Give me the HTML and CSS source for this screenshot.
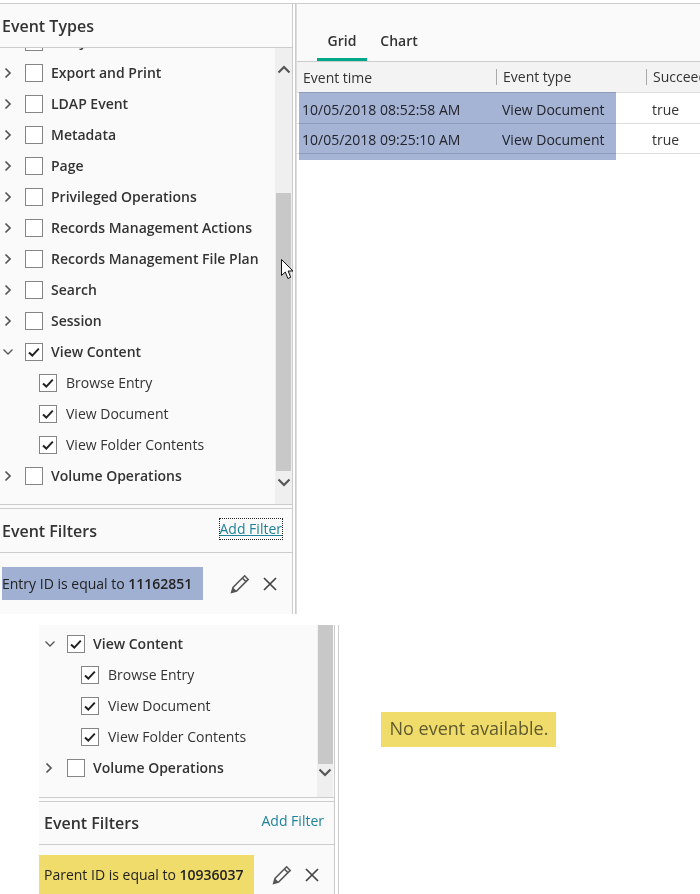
FILE: index.html
```html
<!DOCTYPE html>
<html lang="en">
<head>
<meta charset="utf-8">
<title>Audit events</title>
<link rel="stylesheet" href="styles.css">
</head>
<body>
<svg class="defs" width="0" height="0" aria-hidden="true">
  <defs>
    <symbol id="right" viewBox="0 0 8 12"><path d="M1.5 1.5 6 6l-4.5 4.5" fill="none" stroke="#555" stroke-width="1.7"/></symbol>
    <symbol id="down" viewBox="0 0 12 8"><path d="M1.5 1.5 6 6l4.5-4.5" fill="none" stroke="#555" stroke-width="1.3"/></symbol>
    <symbol id="tick" viewBox="0 0 16 16"><path d="M3 8.500 6.300 11.600 12.800 4.600" fill="none" stroke="#222" stroke-width="2"/></symbol>
    <symbol id="pencil" viewBox="0 0 20 20"><path d="M14.6 1.8 18.2 5.4 6.6 17 1.6 18.4 3 13.4Z M12.4 4 16 7.6" fill="none" stroke="#555" stroke-width="1.5"/><path d="M1.6 18.4 3 13.4 6.6 17Z" fill="#555"/></symbol>
    <symbol id="close" viewBox="0 0 16 16"><path d="M2 2 14 14M14 2 2 14" fill="none" stroke="#444" stroke-width="1.7"/></symbol>
    <symbol id="sb-up" viewBox="0 0 14 9"><path d="M1.5 7.5 7 2l5.500 5.500" fill="none" stroke="#555" stroke-width="2.200"/></symbol>
    <symbol id="sb-down" viewBox="0 0 14 9"><path d="M1.500 1.500 7 7l5.500-5.500" fill="none" stroke="#555" stroke-width="2.200"/></symbol>
  </defs>
</svg>

<section class="shot-top">
  <aside class="side">
    <h2 class="side-title">Event Types</h2>
    <div class="tree-wrap">
      <ul class="tree tree-scrolled">
        <li class="row"><svg class="chev"><use href="#right"/></svg><span class="box"></span><span class="lbl">Entry</span></li>
        <li class="row"><svg class="chev"><use href="#right"/></svg><span class="box"></span><span class="lbl">Export and Print</span></li>
        <li class="row"><svg class="chev"><use href="#right"/></svg><span class="box"></span><span class="lbl">LDAP Event</span></li>
        <li class="row"><svg class="chev"><use href="#right"/></svg><span class="box"></span><span class="lbl">Metadata</span></li>
        <li class="row"><svg class="chev"><use href="#right"/></svg><span class="box"></span><span class="lbl">Page</span></li>
        <li class="row"><svg class="chev"><use href="#right"/></svg><span class="box"></span><span class="lbl">Privileged Operations</span></li>
        <li class="row"><svg class="chev"><use href="#right"/></svg><span class="box"></span><span class="lbl">Records Management Actions</span></li>
        <li class="row"><svg class="chev"><use href="#right"/></svg><span class="box"></span><span class="lbl">Records Management File Plan</span></li>
        <li class="row"><svg class="chev"><use href="#right"/></svg><span class="box"></span><span class="lbl">Search</span></li>
        <li class="row"><svg class="chev"><use href="#right"/></svg><span class="box"></span><span class="lbl">Session</span></li>
        <li class="row"><svg class="chev chev-open"><use href="#down"/></svg><span class="box"><svg class="tick"><use href="#tick"/></svg></span><span class="lbl">View Content</span></li>
        <li class="row child"><span class="box"><svg class="tick"><use href="#tick"/></svg></span><span class="lbl">Browse Entry</span></li>
        <li class="row child"><span class="box"><svg class="tick"><use href="#tick"/></svg></span><span class="lbl">View Document</span></li>
        <li class="row child"><span class="box"><svg class="tick"><use href="#tick"/></svg></span><span class="lbl">View Folder Contents</span></li>
        <li class="row"><svg class="chev"><use href="#right"/></svg><span class="box"></span><span class="lbl">Volume Operations</span></li>
      </ul>
      <div class="sbar">
        <svg class="sb-arrow"><use href="#sb-up"/></svg>
        <div class="sb-track"><div class="sb-thumb"></div></div>
        <svg class="sb-arrow"><use href="#sb-down"/></svg>
      </div>
    </div>
    <div class="filters">
      <div class="filters-head">
        <h2 class="filters-title">Event Filters</h2>
        <a class="add add-focus" href="#">Add Filter</a>
      </div>
      <div class="filter-row">
        <span class="chip chip-blue">Entry ID is equal to <b>11162851</b></span>
        <svg class="ico-pencil"><use href="#pencil"/></svg>
        <svg class="ico-close"><use href="#close"/></svg>
      </div>
    </div>
  </aside>
  <div class="gutter"></div>
  <main class="content">
    <nav class="tabs">
      <span class="tab tab-on">Grid</span>
      <span class="tab">Chart</span>
    </nav>
    <div class="grid">
      <div class="grid-row grid-head">
        <span class="c1">Event time</span>
        <span class="c2">Event type</span>
        <span class="c3">Succeeded</span>
      </div>
      <div class="grid-row grid-body">
        <span class="c1">10/05/2018 08:52:58 AM</span>
        <span class="c2">View Document</span>
        <span class="c3">true</span>
      </div>
      <div class="grid-row grid-body">
        <span class="c1">10/05/2018 09:25:10 AM</span>
        <span class="c2">View Document</span>
        <span class="c3">true</span>
      </div>
      <div class="hl"></div>
    </div>
  </main>
  <svg class="cursor" width="13" height="22" viewBox="0 0 13 22"><path d="M.5.500V16.500L4.300 13l2.600 6.500 2.800-1.200L7.100 12H12Z" fill="#fff" stroke="#111"/></svg>
</section>

<section class="shot-bottom">
  <aside class="side2">
    <div class="tree-wrap tree-wrap2">
      <ul class="tree">
        <li class="row"><svg class="chev chev-open"><use href="#down"/></svg><span class="box"><svg class="tick"><use href="#tick"/></svg></span><span class="lbl">View Content</span></li>
        <li class="row child"><span class="box"><svg class="tick"><use href="#tick"/></svg></span><span class="lbl">Browse Entry</span></li>
        <li class="row child"><span class="box"><svg class="tick"><use href="#tick"/></svg></span><span class="lbl">View Document</span></li>
        <li class="row child"><span class="box"><svg class="tick"><use href="#tick"/></svg></span><span class="lbl">View Folder Contents</span></li>
        <li class="row"><svg class="chev"><use href="#right"/></svg><span class="box"></span><span class="lbl">Volume Operations</span></li>
      </ul>
      <div class="sbar">
        <div class="sb-track"><div class="sb-thumb sb-thumb2"></div></div>
        <svg class="sb-arrow"><use href="#sb-down"/></svg>
      </div>
    </div>
    <div class="filters filters2">
      <div class="filters-head">
        <h2 class="filters-title">Event Filters</h2>
        <a class="add" href="#">Add Filter</a>
      </div>
      <div class="filter-row">
        <span class="chip chip-yellow">Parent ID is equal to <b>10936037</b></span>
        <svg class="ico-pencil"><use href="#pencil"/></svg>
        <svg class="ico-close"><use href="#close"/></svg>
      </div>
    </div>
  </aside>
  <div class="message-area">
    <p class="message">No event available.</p>
  </div>
</section>
</body>
</html>
```
FILE: styles.css
```css
* { box-sizing: border-box; }
html, body { margin: 0; padding: 0; }
body {
  width: 700px;
  height: 894px;
  overflow: hidden;
  background: #fff;
  font-family: "Open Sans", "Noto Sans", sans-serif;
  font-size: 14px;
  color: #333;
}
.defs { position: absolute; }
ul { list-style: none; margin: 0; padding: 0; }
h2 { margin: 0; font-weight: 600; }

/* top capture */
.shot-top {
  position: relative;
  display: flex;
  height: 614px;
  padding-top: 3px;
}
.side {
  width: 293px;
  background: #fafafa;
  border-top: 1px solid #ccc;
  border-right: 1px solid #ccc;
  display: flex;
  flex-direction: column;
}
.side-title {
  height: 44px;
  flex: none;
  padding: 0 0 0 2px;
  font-size: 16px;
  line-height: 44px;
  color: #333;
  border-bottom: 1px solid #ccc;
}
.tree-wrap {
  display: flex;
  height: 456px;
  flex: none;
  overflow: hidden;
}
.tree { flex: 1; min-width: 0; }
.tree-scrolled { margin-top: -22px; }
.row {
  display: flex;
  align-items: center;
  height: 31px;
  flex: none;
}
.chev {
  width: 8px;
  height: 12px;
  margin-left: 4px;
  margin-right: 13px;
  flex: none;
}
.chev-open {
  width: 12px;
  height: 8px;
  margin-left: 2px;
  margin-right: 11px;
}
.box {
  display: flex;
  width: 18px;
  height: 18px;
  flex: none;
  background: #fff;
  border: 1px solid #858585;
  margin-right: 8px;
}
.tick { width: 16px; height: 16px; }
.lbl {
  font-weight: 600;
  color: #333;
  white-space: nowrap;
}
.child { padding-left: 39px; }
.child .box { margin-right: 9px; }
.child .lbl { font-weight: 400; }

.sbar {
  width: 17px;
  flex: none;
  background: #efefef;
  display: flex;
  flex-direction: column;
  align-items: center;
  padding-top: 17px;
}
.sb-arrow { width: 14px; height: 9px; flex: none; }
.sb-track {
  flex: 1;
  width: 15px;
  display: flex;
  flex-direction: column;
  justify-content: flex-end;
  padding-bottom: 7px;
  margin-top: 0;
}
.sb-thumb { height: 278px; background: #c8c8c8; }
.sbar .sb-arrow:last-child { margin-bottom: 17px; }

.filters {
  flex: 1;
  border-top: 1px solid #ccc;
  display: flex;
  flex-direction: column;
  position: relative;
}
.filters-head {
  display: flex;
  justify-content: space-between;
  align-items: flex-start;
  height: 45px;
  flex: none;
  margin-top: 3px;
  border-top: 1px solid #ccc;
  border-bottom: 1px solid #ccc;
  padding: 8px 10px 0 2px;
}
.filters-title {
  font-size: 16px;
  line-height: 28px;
  color: #333;
}
.add {
  color: #1f8299;
  line-height: 20px;
  text-decoration: none;
}
.add-focus {
  text-decoration: underline;
  outline: 1px dotted #222;
  margin-top: 2px;
}
.filter-row {
  display: flex;
  align-items: center;
  padding: 14px 0 0 2px;
}
.chip {
  display: block;
  color: #222;
  white-space: nowrap;
  line-height: 33px;
  height: 33px;
}
.chip b { font-weight: 600; }
.chip-blue { width: 201px; background: #a0b0d2; }
.chip-yellow {
  width: 215px;
  height: 39px;
  line-height: 39px;
  padding-left: 5px;
  background: #f0dc6a;
}
.ico-pencil { width: 20px; height: 20px; margin-left: 27px; flex: none; }
.ico-close { width: 16px; height: 16px; margin-left: 12px; flex: none; }

.gutter {
  width: 3px;
  flex: none;
  margin-top: 0;
  border-right: 1px solid #ccc;
  border-top: 1px solid #ccc;
}
.content {
  flex: 1;
  min-width: 0;
  overflow: hidden;
  background: #fff;
  border-top: 1px solid #ccc;
  border-left: 1px solid #ddd;
}
.tabs {
  display: flex;
  height: 57px;
  background: #fafafa;
  padding-left: 20px;
  align-items: flex-end;
}
.tab {
  width: 50px;
  height: 41px;
  padding-top: 8px;
  line-height: 26px;
  font-weight: 600;
  text-align: center;
  color: #333;
}
.tab-on { border-bottom: 3px solid #00a88a; margin-right: 7px; }
.grid { position: relative; }
.grid-row {
  display: flex;
  white-space: nowrap;
}
.grid-row span { flex: none; }
.grid-head {
  height: 32px;
  margin-bottom: 1px;
  align-items: center;
  background: #f3f3f3;
  border-top: 1px solid #ccc;
  border-bottom: 1px solid #ddd;
  color: #333;
}
.grid-head .c2, .grid-head .c3 {
  border-left: 1px solid #aaa;
  height: 16px;
  line-height: 16px;
}
.grid-head .c1 { padding-left: 6px; width: 199px; }
.grid-head .c2 { padding-left: 6px; width: 150px; }
.grid-head .c3 { padding-left: 6px; }
.grid-body {
  height: 30px;
  padding-top: 2px;
  align-items: center;
  border-bottom: 1px solid #ddd;
  color: #333;
}
.grid-body .c1 { padding-left: 5px; width: 200px; }
.grid-body .c2 { padding-left: 5px; width: 150px; }
.grid-body .c3 { padding-left: 5px; }
.hl {
  position: absolute;
  left: 2px;
  top: 31px;
  width: 317px;
  height: 68px;
  background: rgba(116, 138, 190, 0.65);
  mix-blend-mode: multiply;
}
.cursor { position: absolute; left: 281px; top: 259px; }

/* bottom capture */
.shot-bottom {
  display: flex;
  height: 269px;
  margin-top: 11px;
  padding-left: 39px;
}
.side2 {
  width: 296px;
  flex: none;
  background: #fafafa;
  border-right: 1px solid #ccc;
  display: flex;
  flex-direction: column;
  box-shadow: 3px 0 0 #fff, 4px 0 0 #ccc;
}
.tree-wrap2 { height: 172px; }
.tree-wrap2 .tree { padding-left: 0; margin-top: 3px; }
.tree-wrap2 .chev { margin-left: 6px; margin-right: 14px; }
.tree-wrap2 .chev-open { margin-left: 5px; margin-right: 11px; }
.tree-wrap2 .child { padding-left: 42px; }
.tree-wrap2 .sbar { padding-top: 0; width: 16px; margin-right: 1px; }
.tree-wrap2 .sb-track { padding-bottom: 0; }
.sb-thumb2 { height: 139px; }
.tree-wrap2 .sb-arrow:last-child { margin-top: 4px; margin-bottom: 20px; }
.filters2 .filters-head { height: 44px; padding: 7px 10px 0 5px; }
.filters2 .add { margin-top: 2px; }
.filters2 .filter-row { padding: 10px 0 0 0; }
.filters2 .ico-pencil { margin-left: 18px; }
.message-area {
  padding: 87px 0 0 46px;
}
.message {
  margin: 0;
  width: 175px;
  height: 35px;
  padding-left: 1px;
  line-height: 33px;
  text-align: center;
  font-size: 18px;
  background: #f0dc6a;
  color: #5f5a30;
  white-space: nowrap;
}
```
